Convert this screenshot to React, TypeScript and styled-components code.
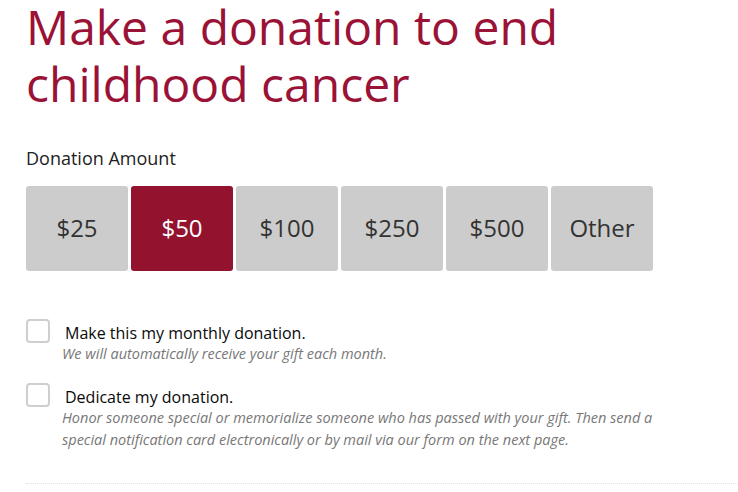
import styled, {createGlobalStyle} from "styled-components";

const GlobalStyle = createGlobalStyle`
    body {
        margin: 0;
        background: #fff;
        font-family: 'Open Sans', sans-serif;
        overflow: hidden;
    }
`

const amounts = ['$25', '$50', '$100', '$250', '$500', 'Other']

const options = [
    {
        label: 'Make this my monthly donation.',
        note: 'We will automatically receive your gift each month.',
    },
    {
        label: 'Dedicate my donation.',
        note: 'Honor someone special or memorialize someone who has passed with your gift. Then send a special notification card electronically or by mail via our form on the next page.',
    },
]

export default function App() {
    return (
        <>
            <GlobalStyle/>
            <StyledForm>
                <Title>Make a donation to end childhood cancer</Title>
                <AmountLabel>Donation Amount</AmountLabel>
                <AmountRow>
                    {amounts.map(a => (
                        <AmountButton key={a} active={a === '$50'}>{a}</AmountButton>
                    ))}
                </AmountRow>
                <Options>
                    {options.map(o => (
                        <Option key={o.label}>
                            <CheckRow>
                                <CheckBox/>
                                <CheckLabel>{o.label}</CheckLabel>
                            </CheckRow>
                            <Note>{o.note}</Note>
                        </Option>
                    ))}
                </Options>
                <Divider/>
            </StyledForm>
        </>
    );
}

const StyledForm = styled.section`
    padding-left: 26px;
`

const Title = styled.h1`
    margin: -2px 0 0;
    max-width: 560px;
    font-weight: 400;
    font-size: 48px;
    line-height: 57px;
    color: #9a1236;
`

const AmountLabel = styled.div`
    margin-top: 34px;
    font-size: 18px;
    line-height: 24px;
    color: #222;
`

const AmountRow = styled.div`
    display: flex;
    gap: 3px;
    margin-top: 16px;
`

const AmountButton = styled.div<{ active?: boolean }>`
    width: 102px;
    height: 85px;
    display: flex;
    align-items: center;
    justify-content: center;
    padding-bottom: 2px;
    box-sizing: border-box;
    border-radius: 3px;
    font-size: 24px;
    background: ${p => p.active ? '#93122d' : '#cccccc'};
    color: ${p => p.active ? '#fff' : '#333'};
`

const Options = styled.div`
    margin-top: 48px;
    display: flex;
    flex-direction: column;
    gap: 18px;
`

const Option = styled.div`
    display: flex;
    flex-direction: column;
`

const CheckRow = styled.div`
    display: flex;
    align-items: flex-start;
    height: 24px;
    gap: 15px;
`

const CheckBox = styled.span`
    box-sizing: border-box;
    width: 24px;
    height: 24px;
    border: 2px solid #cfcfcf;
    border-radius: 4px;
    background: #fff;
`

const CheckLabel = styled.span`
    margin-top: 2px;
    font-size: 16px;
    line-height: 24px;
    color: #0a0a0a;
`

const Note = styled.p`
    margin: 0 0 0 36px;
    max-width: 610px;
    font-size: 14.5px;
    font-style: italic;
    line-height: 22px;
    color: #777;
`

const Divider = styled.hr`
    margin: 32px 0 0;
    border: none;
    border-top: 1px dotted #e2e2e2;
`
